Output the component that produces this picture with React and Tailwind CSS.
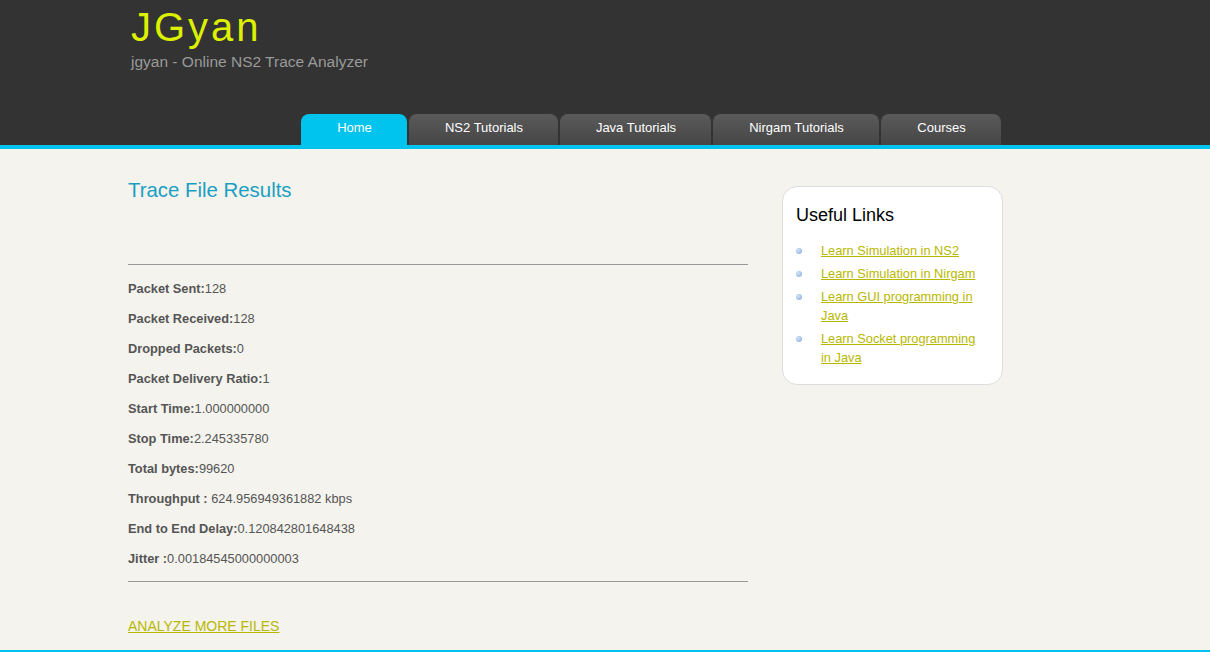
const stats = [
  ['Packet Sent:', '128'],
  ['Packet Received:', '128'],
  ['Dropped Packets:', '0'],
  ['Packet Delivery Ratio:', '1'],
  ['Start Time:', '1.000000000'],
  ['Stop Time:', '2.245335780'],
  ['Total bytes:', '99620'],
  ['Throughput : ', '624.956949361882 kbps'],
  ['End to End Delay:', '0.120842801648438'],
  ['Jitter :', '0.00184545000000003'],
]

const tabs = [
  { label: 'Home', w: 'w-[106px]', active: true },
  { label: 'NS2 Tutorials', w: 'w-[149px]' },
  { label: 'Java Tutorials', w: 'w-[151px]' },
  { label: 'Nirgam Tutorials', w: 'w-[166px]' },
  { label: 'Courses', w: 'w-[120px]' },
]

const links = [
  'Learn Simulation in NS2',
  'Learn Simulation in Nirgam',
  'Learn GUI programming in Java',
  'Learn Socket programming in Java',
]

export default function App() {
  return (
    <div className="min-h-[652px] bg-[#f4f3ed] font-['Liberation_Sans',Arial,sans-serif] border-b-[2px] border-[#00c4ee]">
      <header className="bg-[#333333] border-b-[4px] border-[#00c4ee]">
        <div className="w-[954px] mx-auto">
          <div className="pt-[3px] pl-[3px] h-[114px]">
            <h1 className="text-[40px] leading-[48px] tracking-[3px] text-[#dcf000]">JGyan</h1>
            <p className="text-[15.5px] leading-[20px] text-[#9a9a9a] mt-[1px]">jgyan - Online NS2 Trace Analyzer</p>
          </div>
          <nav className="flex gap-[2px] pl-[173px]">
            {tabs.map((t) => (
              <a
                key={t.label}
                className={`${t.w} h-[31px] rounded-t-[8px] flex justify-center pt-[4px] pl-[1px] text-[13px] text-white ${
                  t.active ? 'bg-[#00c4ee]' : 'bg-gradient-to-b from-[#5a5a5a] to-[#464646]'
                }`}
              >
                {t.label}
              </a>
            ))}
          </nav>
        </div>
      </header>

      <div className="w-[954px] mx-auto flex">
        <main className="w-[620px]">
          <h2 className="mt-[28px] text-[20.4px] leading-[26px] text-[#1a9fc2]">Trace File Results</h2>
          <hr className="mt-[61px] border-t border-[#999999]" />
          <div className="mt-[16px] text-[12.8px] text-[#555555]">
            {stats.map(([k, v]) => (
              <p key={k} className="leading-[16px] mb-[14px]">
                <b>{k}</b>
                {v}
              </p>
            ))}
          </div>
          <hr className="mt-[1px] border-t border-[#999999]" />
          <a className="block mt-[35px] text-[14px] leading-[18px] text-[#b8b800] underline">ANALYZE MORE FILES</a>
        </main>

        <aside className="ml-[34px] mt-[37px] w-[221px] h-[199px] bg-white border border-[#dddddd] rounded-[15px] px-[13px] pt-[17px]">
          <h3 className="text-[18px] leading-[22px] text-black">Useful Links</h3>
          <ul className="mt-[15px] text-[12.8px] leading-[19px]">
            {links.map((l) => (
              <li key={l} className="flex mb-[4px]">
                <span className="mt-[7px] w-[6px] h-[6px] rounded-full bg-[radial-gradient(circle_at_35%_35%,#d4e4f7,#7fa7d8)] shrink-0" />
                <a className="ml-[19px] text-[#b8b800] underline pr-[4px]">{l}</a>
              </li>
            ))}
          </ul>
        </aside>
      </div>
    </div>
  )
}
